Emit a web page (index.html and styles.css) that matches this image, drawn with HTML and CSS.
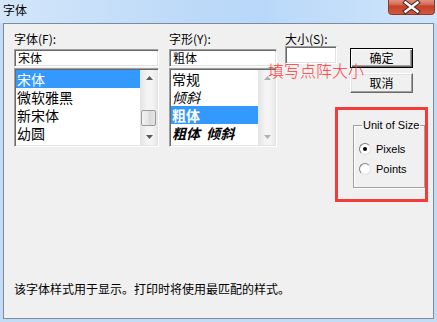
FILE: index.html
```html
<!DOCTYPE html>
<html lang="zh-CN">
<head>
    <meta charset="UTF-8">
    <title>字体</title>
    <link rel="stylesheet" href="styles.css">
</head>
<body>
    <div class="window">
        <div class="titlebar">
            <span class="title">字体</span>
            <svg class="close" width="47" height="15" viewBox="0 0 47 15">
                <defs>
                    <linearGradient id="closeGrad" x1="0" y1="0" x2="0" y2="1">
                        <stop offset="0" stop-color="#eab0a2"/>
                        <stop offset="0.45" stop-color="#d86d58"/>
                        <stop offset="0.55" stop-color="#c5412a"/>
                        <stop offset="1" stop-color="#d25a3f"/>
                    </linearGradient>
                </defs>
                <rect x="0.5" y="-4" width="46" height="18.5" rx="3" fill="url(#closeGrad)" stroke="#8b3a2c"/>
                <path d="M17.5 2.5 L29.5 11.5 M29.5 2.5 L17.5 11.5" stroke="#4a2a26" stroke-width="4.5" stroke-linecap="square"/>
                <path d="M17.5 2.5 L29.5 11.5 M29.5 2.5 L17.5 11.5" stroke="#ffffff" stroke-width="2.4" stroke-linecap="square"/>
            </svg>
        </div>

        <div class="client">
            <div class="top">
                <div class="col col-font">
                    <div class="label">字体(F):</div>
                    <div class="field">宋体</div>
                    <div class="list">
                        <ul class="items">
                            <li class="selected">宋体</li>
                            <li>微软雅黑</li>
                            <li>新宋体</li>
                            <li>幼圆</li>
                        </ul>
                        <div class="scrollbar">
                            <div class="arrow"><svg width="7" height="4" viewBox="0 0 7 4"><polygon points="0,4 3.5,0 7,4"/></svg></div>
                            <div class="track"><div class="thumb"></div></div>
                            <div class="arrow"><svg width="7" height="4" viewBox="0 0 7 4"><polygon points="0,0 3.5,4 7,0"/></svg></div>
                        </div>
                    </div>
                </div>

                <div class="col col-style">
                    <div class="label">字形(Y):</div>
                    <div class="field">粗体</div>
                    <div class="list">
                        <ul class="items">
                            <li>常规</li>
                            <li class="italic">倾斜</li>
                            <li class="selected bold">粗体</li>
                            <li class="bold italic">粗体&nbsp;&nbsp;倾斜</li>
                        </ul>
                        <div class="scrollbar disabled">
                            <div class="arrow"><svg width="7" height="4" viewBox="0 0 7 4"><polygon points="0,4 3.5,0 7,4"/></svg></div>
                            <div class="track"></div>
                            <div class="arrow"><svg width="7" height="4" viewBox="0 0 7 4"><polygon points="0,0 3.5,4 7,0"/></svg></div>
                        </div>
                    </div>
                </div>

                <div class="col col-size">
                    <div class="label">大小(S):</div>
                    <div class="field"></div>
                </div>

                <div class="col col-buttons">
                    <button class="btn default">确定</button>
                    <button class="btn">取消</button>
                    <fieldset class="unit">
                        <legend>Unit of Size</legend>
                        <div class="radio checked"><span class="dot"></span>Pixels</div>
                        <div class="radio"><span class="dot"></span>Points</div>
                    </fieldset>
                </div>
            </div>

            <p class="hint">该字体样式用于显示。打印时将使用最匹配的样式。</p>
        </div>

        <div class="note">填写点阵大小</div>
        <div class="highlight"></div>
    </div>
</body>
</html>
```

FILE: styles.css
```css
html, body {
    margin: 0;
    padding: 0;
    overflow: hidden;
}
body {
    font-family: "Noto Sans CJK SC", "Liberation Sans", sans-serif;
    font-size: 12px;
    color: #000;
}
.window {
    position: relative;
    width: 437px;
    height: 322px;
    background: #c3dcf5;
    display: flex;
    flex-direction: column;
}
.titlebar {
    height: 23px;
    display: flex;
    justify-content: space-between;
    align-items: flex-start;
    padding-left: 3px;
    background: linear-gradient(90deg, #d3e6fa 0%, #bcd9f8 45%, #b9d8f9 60%, #d0e5fa 100%);
}
.title {
    line-height: 19px;
    font-size: 12px;
}
.close {
    display: block;
    margin-right: 2px;
}
.client {
    flex: 1;
    margin: 0 3px 3px 3px;
    border: 1px solid #7d8b9c;
    background: #f0f0f0;
    display: flex;
    flex-direction: column;
    padding: 7px 0 0 10px;
}
.top {
    display: flex;
    align-items: flex-start;
}
.label {
    height: 16px;
    line-height: 16px;
    margin-bottom: 2px;
    white-space: nowrap;
}
.field {
    box-sizing: border-box;
    height: 18px;
    line-height: 14px;
    padding-left: 2px;
    background: #fff;
    border: 1px solid;
    border-color: #a0a0a0 #fff #fff #a0a0a0;
    box-shadow: inset 1px 1px 0 #696969, inset -1px -1px 0 #e3e3e3;
    padding-top: 1px;
    padding-left: 3px;
}
.col-font {
    width: 145px;
}
.col-style {
    width: 108px;
    margin-left: 10px;
}
.col-size {
    width: 52px;
    margin-left: 8px;
}
.col-size .label {
    height: 15px;
    margin-bottom: 0;
}
.col-buttons {
    width: 78px;
    margin-left: 13px;
    margin-top: 17px;
}
.list {
    box-sizing: border-box;
    height: 79px;
    margin-top: 1px;
    display: flex;
    background: #fff;
    border: 1px solid;
    border-color: #a0a0a0 #fff #fff #a0a0a0;
    box-shadow: inset 1px 1px 0 #696969, inset -1px -1px 0 #e3e3e3;
    padding: 1px 1px 1px 1px;
}
.items {
    flex: 1;
    list-style: none;
    margin: 0;
    padding: 0;
    overflow: hidden;
}
.items li {
    height: 18px;
    line-height: 18px;
    font-size: 14px;
    padding-left: 1px;
    white-space: nowrap;
}
.items li.selected {
    background: #3399ff;
    color: #fff;
}
.items li.italic {
    font-style: italic;
}
.items li.bold {
    font-weight: bold;
}
.scrollbar {
    width: 16px;
    display: flex;
    flex-direction: column;
    background: linear-gradient(90deg, #e6e6e6, #f4f4f4 40%, #f4f4f4 70%, #e8e8e8);
    border-left: 1px solid #e4e4e4;
}
.scrollbar .arrow {
    height: 16px;
    display: flex;
    align-items: center;
    justify-content: center;
}
.scrollbar .arrow polygon {
    fill: #5a5a5a;
}
.scrollbar.disabled .arrow polygon {
    fill: #b0b0b0;
}
.scrollbar .track {
    flex: 1;
    position: relative;
}
.thumb {
    position: absolute;
    left: 0;
    right: 1px;
    top: 24px;
    height: 16px;
    box-sizing: border-box;
    border: 1px solid #9a9a9a;
    border-radius: 2px;
    background: linear-gradient(90deg, #f2f2f2, #e4e4e4 50%, #d6d6d6 51%, #e6e6e6);
}
.btn {
    display: block;
    box-sizing: border-box;
    width: 63px;
    height: 20px;
    padding: 0;
    font-family: "Noto Sans CJK SC", "Liberation Sans", sans-serif;
    font-size: 12px;
    line-height: 16px;
    background: #f0f0f0;
    border: 1px solid;
    border-color: #fff #696969 #696969 #fff;
    box-shadow: inset -1px -1px 0 #a0a0a0, inset 1px 1px 0 #e3e3e3;
    color: #000;
}
.btn + .btn {
    margin-top: 5px;
}
.btn.default {
    border-color: #000;
    box-shadow: inset 1px 1px 0 #fff, inset -1px -1px 0 #696969, inset -2px -2px 0 #a0a0a0;
}
.unit {
    box-sizing: border-box;
    width: 72px;
    height: 69px;
    margin: 26px 0 0 3px;
    padding: 7px 0 0 5px;
    border: 1px solid #a0a0a0;
    box-shadow: 1px 1px 0 #fff, inset 1px 1px 0 #fff;
    font-family: "Liberation Sans", Arial, sans-serif;
    font-size: 11px;
}
.unit legend {
    padding: 0 1px;
    margin-left: 3px;
    line-height: 13px;
}
.radio {
    height: 20px;
    display: flex;
    align-items: center;
}
.dot {
    box-sizing: border-box;
    width: 12px;
    height: 12px;
    border-radius: 50%;
    margin-right: 5px;
    border: 1px solid;
    border-color: #808080 #e3e3e3 #e3e3e3 #808080;
    background: radial-gradient(circle, #fff 0, #fff 60%, #e8e8e8 100%);
    display: flex;
    align-items: center;
    justify-content: center;
}
.radio.checked .dot::after {
    content: "";
    width: 4px;
    height: 4px;
    border-radius: 50%;
    background: #000;
}
.hint {
    margin: auto 0 0 0;
    padding-bottom: 21px;
    line-height: 16px;
    font-size: 12px;
}
.note {
    position: absolute;
    left: 268px;
    top: 61px;
    font-size: 16px;
    line-height: 18px;
    font-weight: 300;
    color: #ff3636;
    white-space: nowrap;
}
.highlight {
    position: absolute;
    left: 335px;
    top: 107px;
    width: 93px;
    height: 95px;
    box-sizing: border-box;
    border: 3px solid #f53a3a;
}
```
